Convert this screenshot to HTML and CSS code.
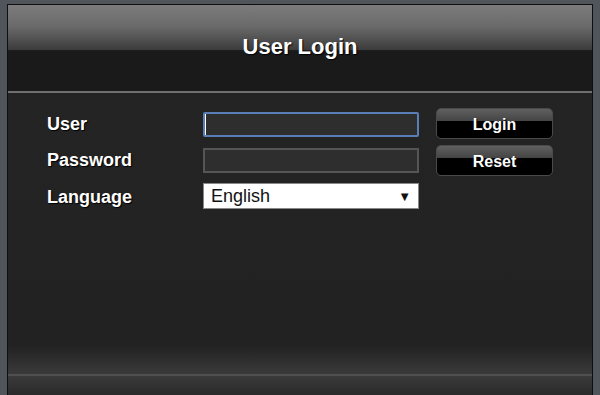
FILE: index.html
```html
<!DOCTYPE html>
<html lang="en">
<head>
    <meta charset="UTF-8">
    <title>User Login</title>
    <link rel="stylesheet" href="styles.css">
</head>
<body>
    <div class="login-panel">
        <div class="header">
            <h1>User Login</h1>
        </div>

        <div class="content">
            <div class="login-form">
                <div class="fields">
                    <label class="field-label" for="userInput">User</label>
                    <input type="text" class="text-input focused" id="userInput">

                    <label class="field-label" for="passwordInput">Password</label>
                    <input type="password" class="text-input" id="passwordInput">

                    <label class="field-label" for="languageSelect">Language</label>
                    <div class="select-box" id="languageSelect">
                        <span>English</span>
                        <span class="arrow">&#9660;</span>
                    </div>
                </div>

                <div class="actions">
                    <button class="button">Login</button>
                    <button class="button">Reset</button>
                </div>
            </div>
        </div>

        <div class="footer"></div>
    </div>
</body>
</html>
```

FILE: styles.css
```css
* {
    margin: 0;
    padding: 0;
    box-sizing: border-box;
}

html, body {
    height: 100%;
}

body {
    font-family: "Liberation Sans", Arial, sans-serif;
    background: #50555c;
    padding: 4px 7px 0 7px;
    overflow: hidden;
}

.login-panel {
    height: 100%;
    border: 1px solid #0e0e0e;
    border-bottom: none;
    background: #232323;
    display: flex;
    flex-direction: column;
}

.header {
    height: 88px;
    background: linear-gradient(180deg, #7c7c7c 0%, #6a6a6a 25%, #3c3c3c 52%, #1a1a1a 53%, #1a1a1a 100%);
    border-bottom: 2px solid #707070;
    display: flex;
    justify-content: center;
    padding-top: 29px;
}

.header h1 {
    color: #fff;
    font-size: 22px;
    font-weight: 700;
    text-shadow: 1px 1px 1px #000;
}

.content {
    flex: 1;
    padding: 15px 0 0 39px;
    background: linear-gradient(180deg, #242424 0%, #222 90%, #3a3a3a 100%);
}

.login-form {
    display: flex;
    align-items: flex-start;
    gap: 17px;
}

.fields {
    display: grid;
    grid-template-columns: 156px 216px;
    grid-template-rows: 25px 25px 26px;
    row-gap: 11px;
    align-items: center;
    padding-top: 4px;
}

.fields .select-box {
    margin-top: -3px;
}

.field-label {
    color: #fff;
    font-size: 18px;
    font-weight: 700;
    text-shadow: 1px 1px 1px #000;
}

.text-input {
    width: 216px;
    height: 25px;
    background: #2e2e2e;
    border: 2px solid #555;
    color: #fff;
    font-size: 15px;
    padding: 0 4px;
    outline: none;
}

.text-input.focused {
    border-color: #5a7fb8;
    border-radius: 2px;
    box-shadow: inset 2px 0 0 -1px #fff;
}

.select-box {
    width: 216px;
    height: 26px;
    background: #fff;
    border: 1px solid #888;
    display: flex;
    align-items: center;
    justify-content: space-between;
    padding: 1px 7px 0 7px;
    font-size: 18px;
    color: #111;
}

.select-box .arrow {
    font-size: 13px;
}

.actions {
    display: flex;
    flex-direction: column;
    gap: 6px;
}

.button {
    width: 117px;
    height: 31px;
    border: 1px solid #4a4a4a;
    border-radius: 5px;
    background: linear-gradient(180deg, #606060 0%, #454545 40%, #000 42%, #000 100%);
    color: #fff;
    font-family: inherit;
    font-size: 16px;
    font-weight: 700;
    text-shadow: 1px 1px 1px #000;
    padding-top: 3px;
    cursor: pointer;
}

.footer {
    height: 21px;
    border-top: 2px solid #505050;
    background: linear-gradient(180deg, #3a3a3a 0%, #2a2a2a 100%);
}
```
